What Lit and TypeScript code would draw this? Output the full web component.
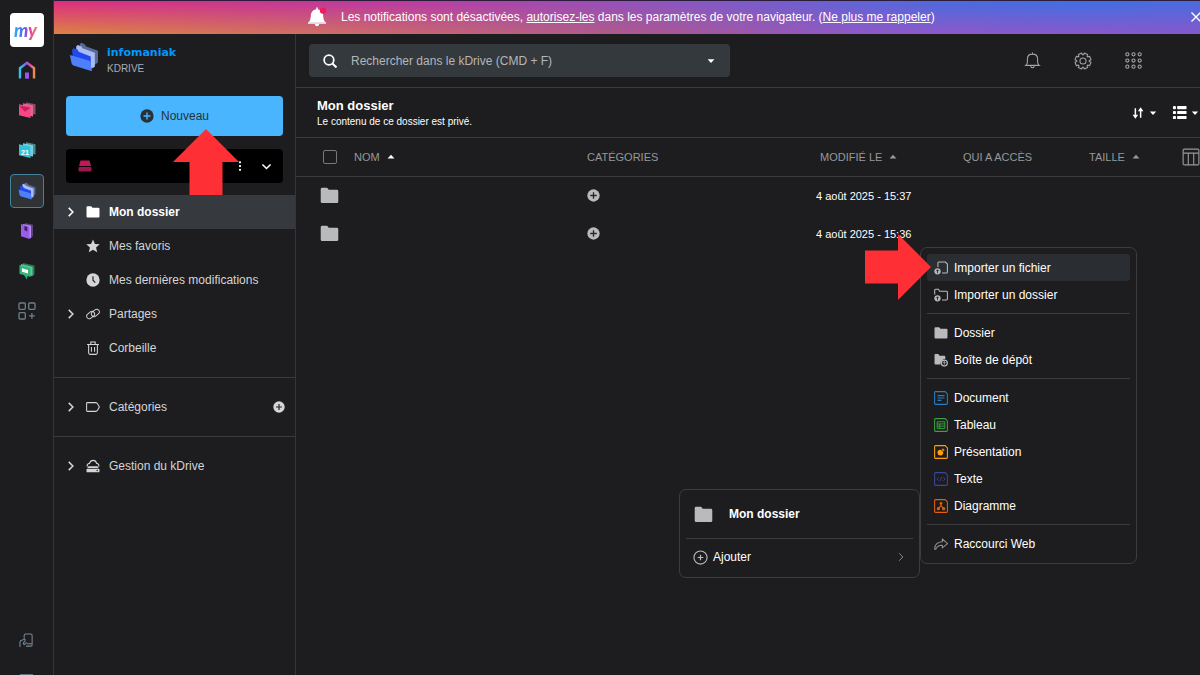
import { LitElement, html, css, svg, nothing } from "lit";
import { customElement } from "lit/decorators.js";
import { classMap } from "lit/directives/class-map.js";

const icon = (size: number, body: unknown, box = "0 0 16 16") => html`
  <svg class="icon" width=${size} height=${size} viewBox=${box} fill="none" aria-hidden="true">${body}</svg>`;

const folder = svg`<path d="M.6 2.700Q.6 1.500 1.800 1.500H5.600Q6.200 1.500 6.600 2.100L7.300 3.200H14.200Q15.400 3.200 15.400 4.400V13.200Q15.400 14.400 14.200 14.400H1.800Q.6 14.400 .6 13.200Z" fill="currentColor"/>`;
const disc = (cross: string) => svg`<circle cx="8" cy="8" r="7.600" fill="currentColor"/><path d="M8 4V12M4 8H12" stroke=${cross} stroke-width="1.600"/>`;
const plusDisc = disc("#232527");
const chevronRight = svg`<path d="M5 2.500L10.500 8L5 13.500" stroke="currentColor" stroke-width="2"/>`;
const chevronDown = svg`<path d="M3 5.500L8 10.500L13 5.500" stroke="currentColor" stroke-width="1.900"/>`;
const caretDown = svg`<path d="M3 5.500H13L8 11Z" fill="currentColor"/>`;
const caretUp = svg`<path d="M2.500 10.500H13.500L8 4.500Z" fill="currentColor"/>`;
const star = svg`<path d="M8 .6L10.200 5.600L15.700 6.100L11.500 9.700L12.800 15.200L8 12.300L3.200 15.200L4.500 9.700L.3 6.100L5.800 5.600Z" fill="currentColor"/>`;
const clock = svg`<circle cx="8" cy="8" r="7.600" fill="currentColor"/><path d="M8 3.800V8.300L10.600 10.900" stroke="#1d1d1f" stroke-width="1.300"/>`;
const link = svg`<g stroke="currentColor" stroke-width="1.100"><rect x="-4.900" y="-3" width="9.800" height="6" rx="3" transform="translate(5.300 9.200) rotate(-38)"/><rect x="-4.900" y="-3" width="9.800" height="6" rx="3" transform="translate(10.700 6.800) rotate(-38)"/></g>`;
const bin = svg`<path d="M1.200 4H14.800M5.500 4V1.200H10.500V4M3 4V13.500Q3 15.300 4.700 15.300H11.300Q13 15.300 13 13.500V4M6.200 6.800V12.200M9.800 6.800V12.200" stroke="currentColor" stroke-width="1.200"/>`;
const tag = svg`<path d="M1.200 3H11Q12.500 3 13.500 4.800L15 7.300Q15.300 8 15 8.700L13.500 11.200Q12.500 13 11 13H1.800Q.7 13 .7 12V4Q.7 3 1.500 3Z" stroke="currentColor" stroke-width="1.200"/>`;
const cloudDrive = svg`<path d="M1.500 8.800Q.6 5.600 4 5Q5 1.600 8.200 1.600Q11.300 1.600 12.200 5Q15.500 5.600 14.500 8.800" stroke="currentColor" stroke-width="1.300"/><path d="M2.800 8.300H13.200L14.500 10.200H1.500Z" fill="currentColor"/><rect x=".6" y="11" width="14.800" height="4.200" rx="1" fill="currentColor"/><circle cx="12.800" cy="13.100" r=".8" fill="#1d1d1f"/>`;
const bell = svg`<path d="M1.700 12.600Q3.200 11.500 3.200 9.500V6.600Q3.200 2 8 2Q12.800 2 12.800 6.600V9.500Q12.800 11.500 14.300 12.600ZM8 .4V2M6.300 13.200Q6.800 14.900 8 14.900Q9.200 14.900 9.700 13.200" stroke="currentColor" stroke-width="1"/>`;
const gearOutline = Array.from({ length: 8 }, (_, i) =>
  [[-13, 9], [13, 9], [17, 7], [28, 7]].map(([d, r]) => {
    const a = ((i * 45 + 22.5 + d) * Math.PI) / 180;
    return `${(10 + r * Math.cos(a)).toFixed(2)} ${(10 + r * Math.sin(a)).toFixed(2)}`;
  }).join("L")).join("L");
const gear = svg`<path d=${`M${gearOutline}Z`} stroke="currentColor" stroke-width="1.200" stroke-linejoin="round"/><circle cx="10" cy="10" r="3.400" stroke="currentColor" stroke-width="1.200"/>`;
const dots9 = svg`${[2.200, 8, 13.800].map((y) => [2.200, 8, 13.800].map((x) => svg`<circle cx=${x} cy=${y} r="1.500" stroke="currentColor" stroke-width="1"/>`))}`;
const columns = svg`<rect x="1" y="1" width="14" height="14" rx="1" stroke="currentColor"/><path d="M1 4.500H15M5.600 4.500V15M10.400 4.500V15" stroke="currentColor"/>`;
const upBadge = svg`<circle cx="4" cy="11.800" r="3.600" fill="#b9babc"/><path d="M4 14V10.200M2.500 11.600L4 10L5.500 11.600" stroke="#25282b" stroke-width="1"/>`;
const importFile = svg`<path d="M4.500 6.800V2.300Q4.500 1.200 5.600 1.200H12.900L15.300 3.500V12.600Q15.300 13.800 14 13.800H9.200" stroke="currentColor" stroke-width="1.200"/>${upBadge}`;
const importFolder = svg`<path d="M.8 7.300V2.500Q.8 1.500 1.800 1.500H5L6.500 3.800H14.200Q15.300 3.800 15.300 4.800V12.600Q15.300 13.600 14.200 13.600H9.200" stroke="currentColor" stroke-width="1.200"/>${upBadge}`;
const depositBox = svg`<path d="M.6 2Q.6 1 1.600 1H5L6.300 3H11.700Q12.900 3 12.900 4.100V6.500Q8 7 7.300 13H1.700Q.6 13 .6 11.900Z" fill="currentColor"/><circle cx="11.800" cy="11.500" r="3.400" stroke="currentColor" stroke-width="1.400"/><path d="M11.800 13.300V9.900M10.500 11.100L11.800 9.800L13.100 11.100" stroke="currentColor"/>`;
const page = (body: unknown) => svg`<path d="M1.700 .7H12.700L15.300 3.300V14.200Q15.300 15.300 14.200 15.300H1.700Q.7 15.300 .7 14.200V1.700Q.7 .7 1.700 .7Z" stroke="currentColor" stroke-width="1.200"/>${body}`;
const doc = page(svg`<path d="M4 5.300H12M4 8H12M4 10.700H8.500" stroke="currentColor" stroke-width="1.300"/>`);
const sheet = page(svg`<path d="M3.600 4.300H12.400V11.900H3.600ZM3.600 6.800H12.400M3.600 9.300H12.400M6.600 6.800V11.900" stroke="currentColor" stroke-width="1.100"/>`);
const slides = page(svg`<circle cx="7.300" cy="8.700" r="3.300" fill="currentColor"/><path d="M9 3.600A3.300 3.300 0 0 1 12.300 6.900H9Z" fill="currentColor" stroke="#1d1d1f" stroke-width=".6"/>`);
const code = page(svg`<path d="M5.300 6L3.500 8L5.300 10M10.700 6L12.500 8L10.700 10M8.700 5.800L7.300 10.200" stroke="currentColor" stroke-width="1"/>`);
const diagram = page(svg`<path d="M8 5.500V8M8 7.500L5.200 10.800M8 7.500L10.800 10.800" stroke="currentColor" stroke-width="1.300"/><circle cx="8" cy="5" r="1.600" fill="currentColor"/><circle cx="5" cy="11" r="1.800" fill="currentColor"/><circle cx="11" cy="11" r="1.800" fill="currentColor"/>`);
const share = svg`<path d="M9.500 2.200L15.500 7.500L9.500 12.500V9.500Q4 9.300 2 14H.7Q.8 6 9.500 5.500Z" stroke="currentColor" stroke-width="1.200" stroke-linejoin="round"/>`;

const folders3d = svg`
  <path d="M10.500 2L12 .8L15.500 2.400L16.200 4L28 8.500V19.800L25 22L10.500 16Z" fill="#5a6a99"/>
  <path d="M7 4L8.500 3L12 4.400L13 6L25 10.500V24L22 25.500L7 19Z" fill="#a9bdf4"/>
  <path d="M3 7.500L4.500 6L8.500 7.500L9.300 9.500L21 14V27L4 20Z" fill="#2148f0"/>
  <path d="M.8 12.500L19 17.800Q20.500 18.200 20.700 19.500L22.300 28.200L4.300 22.800Q2.800 22 2.500 20.500Z" fill="#4f80fb"/>`;
const stack = (a: string, b: string, c: string, body: unknown) => svg`
  <path d="M8 1.200L17.500 3.200V13.500L8 12Z" fill=${c}/>
  <path d="M5 2.200L15 4.200V15.500L5 13.500Z" fill=${b}/>
  <path d="M1 3.200L12.500 5.600V17L1 14.200Z" fill=${a}/>${body}`;
const home = svg`<defs><linearGradient id="h" x1="0" x2="1"><stop stop-color="#26c6f5"/><stop offset=".45" stop-color="#8a5cf0"/><stop offset=".75" stop-color="#e0559a"/><stop offset="1" stop-color="#f08a50"/></linearGradient></defs>
  <path d="M2 17.500V7.200L9 1.800L16 7.200V17.500" stroke="url(#h)" stroke-width="2.400"/><rect x="7" y="11.500" width="4" height="6.200" fill="#9a55e8"/>`;
const mail = stack("#fb4585", "#d96a95", "#8f4a66", svg`<path d="M1 4.500L7 10.800L12.500 6.800" fill="#c91f5f"/>`);
const calendar = stack("#2fc4da", "#7ccdd6", "#4a8a92", svg`<text x="3" y="13.500" font-size="7" font-weight="700" fill="#fff" font-family="Liberation Sans, sans-serif">21</text>`);
const book = svg`<path d="M7 1L15 2.800V14L12 17L5 14Z" fill="#5d4585"/><path d="M5 2L13 3.800V16L5 14Z" fill="#b98cf0"/><path d="M3 2L11.500 4.800V17L3 14.200Z" fill="#9a5cf0"/><path d="M6.500 4V9L8 8.200L9.300 10V5Z" fill="#3a2060"/>`;
const chat = svg`<path d="M5 1L16.500 3.500V12.500L12 15L5 11Z" fill="#2a7a55"/><path d="M3 2L14.500 5V14L3 11Z" fill="#62c79a"/><path d="M1.500 3L12.500 6V14.500L9.500 14L9 17.500L6 13L1.500 12Z" fill="#32b57c"/><path d="M4 6.300L10 8V11.500L4 9.800Z" fill="#fff"/>`;
const apps = svg`<g stroke="#6d7f8c" stroke-width="1.300"><rect x="1" y="1" width="6.300" height="6.300" rx="1"/><rect x="10.700" y="1" width="6.300" height="6.300" rx="1"/><rect x="1" y="10.700" width="6.300" height="6.300" rx="1"/><path d="M13.900 11V16.800M11 13.900H16.800"/></g>`;
const device = svg`<g stroke="#75899a" stroke-width="1.100"><path d="M5.500 6V2.500Q5.500 1 7 1H12.500Q14 1 14 2.500V12.500Q14 14 12.500 14H7.500M8 11.500H14"/><path d="M1 15V10.500Q1 8 3.500 7.500L5.500 6.800Q7 6.500 6.500 8L4.500 11L5.500 12.500L8 10"/></g>`;

const RAIL = [
  { name: "Accueil", art: home, box: "0 0 18 18" },
  { name: "Mail", art: mail, box: "0 0 18 18" },
  { name: "Calendrier", art: calendar, box: "0 0 18 18" },
  { name: "kDrive", art: folders3d, box: "0 0 29 29", on: true },
  { name: "Contacts", art: book, box: "0 0 18 18" },
  { name: "kChat", art: chat, box: "0 0 18 18" },
  { name: "Applications", art: apps, box: "0 0 18 18" },
];

const NAV = [
  [
    { label: "Mon dossier", art: folder, open: true, on: true },
    { label: "Mes favoris", art: star },
    { label: "Mes dernières modifications", art: clock },
    { label: "Partages", art: link, open: true },
    { label: "Corbeille", art: bin },
  ],
  [{ label: "Catégories", art: tag, open: true, add: true }],
  [{ label: "Gestion du kDrive", art: cloudDrive, open: true }],
] as { label: string; art: unknown; open?: boolean; on?: boolean; add?: boolean }[][];

const MENU = [
  [
    { label: "Importer un fichier", art: importFile, tone: "grey", on: true },
    { label: "Importer un dossier", art: importFolder, tone: "grey" },
  ],
  [
    { label: "Dossier", art: folder, tone: "grey" },
    { label: "Boîte de dépôt", art: depositBox, tone: "grey" },
  ],
  [
    { label: "Document", art: doc, tone: "blue" },
    { label: "Tableau", art: sheet, tone: "green" },
    { label: "Présentation", art: slides, tone: "amber" },
    { label: "Texte", art: code, tone: "indigo" },
    { label: "Diagramme", art: diagram, tone: "orange" },
  ],
  [{ label: "Raccourci Web", art: share, tone: "dim" }],
] as { label: string; art: unknown; tone: string; on?: boolean }[][];

const base = css`
  :host { display: block; }
  * { box-sizing: border-box; }
  .icon { display: block; flex: none; }
  button { font: inherit; color: inherit; background: none; border: 0; padding: 0; margin: 0; display: flex; align-items: center; text-align: left; }
  a { color: inherit; }
`;

@customElement("app-rail")
class AppRail extends LitElement {
  static styles = [base, css`
    :host { display: flex; flex-direction: column; align-items: center; gap: 6px; width: 54px; flex: none; padding: 13px 0 0; border-right: 1px solid #343537; }
    .cell { width: 34px; height: 34px; display: flex; align-items: center; justify-content: center; border-radius: 4px; border: 1px solid transparent; }
    .on { background: #303336; border-color: #47809c; }
    .logo { background: #fff; }
    .my { font: italic 900 18px/24px Lato, sans-serif; color: transparent; background: linear-gradient(90deg, #28b6ee, #5a5cf0 40%, #e0459c 65%, #f29048); background-clip: text; padding-right: 2px; }
    .on { margin-top: 1px; }
    .end { margin-top: auto; }
    .last { height: 12px; align-items: flex-start; }
    .cut { height: 1px; width: 13px; background: #60717f; margin-top: 10px; }
  `];
  render() {
    return html`
      <button class="cell logo"><span class="my">my</span></button>
      ${RAIL.map((r) => html`<button class=${classMap({ cell: true, on: !!r.on })} aria-label=${r.name}>${icon(18, r.art, r.box)}</button>`)}
      <button class="cell end" aria-label="Appareils">${icon(15, device)}</button>
      <button class="cell last" aria-label="Réduire"><span class="cut"></span></button>`;
  }
}

@customElement("drive-sidebar")
class DriveSidebar extends LitElement {
  static styles = [base, css`
    :host { width: 242px; flex: none; border-right: 1px solid #343537; position: relative; color: #d4d5d7; }
    .brand { display: flex; gap: 8px; padding: 8px 15px 0; height: 62px; }
    .names { padding-top: 3px; }
    .name { font: 700 11px/16px "DejaVu Sans", sans-serif; color: #0098ff; }
    .product { font-size: 10px; line-height: 16px; color: #a4aeb8; }
    .actions { padding: 0 12px 12px; display: grid; gap: 13px; }
    .new { height: 40px; border-radius: 4px; background: #4ab5ff; color: #263238; justify-content: center; gap: 7px; }
    .drive { height: 34px; border-radius: 4px; background: #000; color: #fff; display: flex; align-items: center; padding: 0 10px 0 12px; gap: 14px; }
    .more { margin-left: auto; }
    .group { border-bottom: 1px solid #3a3b3d; padding: 12px 0; }
    .group:first-of-type { padding-top: 0; }
    .group:last-of-type { border-bottom: 0; }
    .row { display: grid; grid-template-columns: 12px 14px 1fr 12px; align-items: center; column-gap: 9px; height: 34px; padding: 0 10px 0 11px; }
    .on { background: #363a3e; color: #fff; font-weight: 700; }
    .row a { text-decoration: none; }
    .pointer { position: absolute; left: 119px; top: 95px; z-index: 2; }
  `];
  render() {
    return html`
      <div class="brand">
        ${icon(30, folders3d, "0 0 29 29")}
        <div class="names"><div class="name">infomaniak</div><div class="product">KDRIVE</div></div>
      </div>
      <div class="actions">
        <button class="new">${icon(14, disc("#4ab5ff"))}Nouveau</button>
        <div class="drive">
          <svg class="icon" width="14" height="12" viewBox="0 0 14 12" aria-hidden="true"><path d="M2.500 .5H11.500L13 6H1Z" fill="#c2185b"/><rect x=".5" y="7" width="13" height="4.500" rx="1" fill="#a01450"/></svg>
          <button class="more" aria-label="Options">${icon(12, svg`<g fill="#fff"><circle cx="8" cy="3" r="1.500"/><circle cx="8" cy="8" r="1.500"/><circle cx="8" cy="13" r="1.500"/></g>`)}</button>
          <button aria-label="Changer de kDrive">${icon(13, chevronDown)}</button>
        </div>
      </div>
      <nav>
        ${NAV.map((g) => html`<section class="group">${g.map((n) => html`
          <div class=${classMap({ row: true, on: !!n.on })}>
            ${n.open ? html`<button aria-label="Déplier">${icon(12, chevronRight)}</button>` : html`<span></span>`}
            ${icon(14, n.art)}
            <a href="#">${n.label}</a>
            ${n.add ? html`<button aria-label="Ajouter">${icon(12, plusDisc)}</button>` : nothing}
          </div>`)}</section>`)}
      </nav>
      <svg class="pointer" width="66" height="66" viewBox="0 0 66 66" aria-hidden="true"><path d="M33 0L66 33H49.500V66H16.500V33H0Z" fill="#ff3035"/></svg>`;
  }
}

@customElement("file-browser")
class FileBrowser extends LitElement {
  static styles = [base, css`
    :host { flex: 1; min-width: 0; color: #fff; }
    .top { display: flex; align-items: center; height: 54px; padding: 0 58px 0 13px; border-bottom: 1px solid #3a3b3d; }
    .search { display: flex; align-items: center; width: 421px; height: 33px; border-radius: 4px; background: #34393d; padding: 0 13px 0 14px; gap: 14px; }
    .search input { flex: 1; min-width: 0; border: 0; background: none; font: inherit; color: #fff; padding: 0; outline: 0; }
    .search input::placeholder { color: #b4b6b8; opacity: 1; }
    .tools { margin-left: auto; display: flex; align-items: center; gap: 33px; color: #a4a5a7; }
    .head { display: flex; justify-content: space-between; align-items: center; height: 49px; padding: 0 0 0 21px; }
    h1 { font-size: 13px; line-height: 18px; margin: 0; }
    .note { margin: 0; font-size: 10px; line-height: 14px; }
    .views { display: flex; gap: 14px; }
    .views button { gap: 3px; }
    table { width: 100%; border-collapse: collapse; table-layout: fixed; font-size: 11px; }
    th, td { padding: 0 0 0 10px; text-align: left; white-space: nowrap; height: 38px; }
    th { height: 39px; font-weight: 400; color: #97989a; border: solid #3a3b3d; border-width: 1px 0; }
    .check { width: 48px; padding-left: 24px; }
    .check input { appearance: none; display: block; width: 14px; height: 14px; margin: 0 0 0 3px; border: 1px solid #77787a; border-radius: 2px; }
    .cat { width: 229px; }
    .date { width: 147px; }
    th.date { padding-left: 14px; }
    .who { width: 126px; }
    .size { width: 94px; }
    .cols { width: 27px; padding-left: 9px; }
    .sort { display: flex; align-items: center; gap: 6px; }
    .bright { color: #fff; }
    .grey { color: #b9babc; }
  `];
  render() {
    return html`
      <header class="top">
        <label class="search">
          ${icon(14, svg`<circle cx="6.800" cy="6.800" r="5.500" stroke="#fff" stroke-width="2"/><path d="M10.800 10.800L15.400 15.400" stroke="#fff" stroke-width="2.300"/>`)}
          <input type="search" aria-label="Rechercher" placeholder="Rechercher dans le kDrive (CMD + F)">
          ${icon(12, svg`<path d="M3.500 5.500H12.500L8 10.500Z" fill="#fff"/>`)}
        </label>
        <div class="tools">
          <button aria-label="Notifications">${icon(17, bell)}</button>
          <button aria-label="Paramètres">${icon(18, gear, "0 0 20 20")}</button>
          <button aria-label="Applications">${icon(17, dots9)}</button>
        </div>
      </header>
      <div class="head">
        <div><h1>Mon dossier</h1><p class="note">Le contenu de ce dossier est privé.</p></div>
        <div class="views">
          <button aria-label="Trier">${icon(14, svg`<path d="M5 2.500V11M11 13.500V5" stroke="#fff" stroke-width="1.700"/><path d="M1.800 10H8.200L5 14.500ZM7.800 6H14.200L11 1.500Z" fill="#fff"/>`)}${icon(10, caretDown)}</button>
          <button aria-label="Affichage">${icon(15, svg`<g fill="#fff"><rect x="1" y="1" width="3.200" height="3.400" rx="1"/><rect x="1" y="6.300" width="3.200" height="3.400" rx="1"/><rect x="1" y="11.600" width="3.200" height="3.400" rx="1"/><rect x="5.500" y="1" width="10" height="3.400" rx=".6"/><rect x="5.500" y="6.300" width="10" height="3.400" rx=".6"/><rect x="5.500" y="11.600" width="10" height="3.400" rx=".6"/></g>`)}${icon(10, caretDown)}</button>
        </div>
      </div>
      <table>
        <thead><tr>
          <th class="check"><input type="checkbox" aria-label="Tout sélectionner"></th>
          <th><span class="sort">NOM <span class="bright">${icon(10, caretUp)}</span></span></th>
          <th class="cat">CATÉGORIES</th>
          <th class="date"><span class="sort">MODIFIÉ LE ${icon(10, caretUp)}</span></th>
          <th class="who">QUI A ACCÈS</th>
          <th class="size"><span class="sort">TAILLE ${icon(10, caretUp)}</span></th>
          <th class="cols"><button aria-label="Colonnes">${icon(18, columns)}</button></th>
        </tr></thead>
        <tbody>
          ${["4 août 2025 - 15:37", "4 août 2025 - 15:36"].map((d) => html`<tr>
            <td class="check grey">${icon(19, folder)}</td><td></td>
            <td class="grey"><button aria-label="Ajouter une catégorie">${icon(13, plusDisc)}</button></td>
            <td>${d}</td><td></td><td></td><td></td>
          </tr>`)}
        </tbody>
      </table>`;
  }
}

@customElement("app-root")
class AppRoot extends LitElement {
  static styles = [base, css`
    :host { display: flex; height: 100vh; overflow: hidden; position: relative; background: #1d1d1f; color: #fff; font: 12px/16px "Liberation Sans", Arial, sans-serif; }
    .page { flex: 1; min-width: 0; display: flex; flex-direction: column; }
    .banner { position: relative; display: flex; align-items: center; gap: 13px; height: 34px; flex: none; padding: 0 0 2px 253px; overflow: hidden; border-top: 1px solid #2c1c38;
      background: linear-gradient(90deg, #dc2d80, #b93ca5 32%, #8958c4 55%, #4b6be0 78%, #3f70e4 90%, #4a6ce0); }
    .banner::before { content: ""; position: absolute; inset: 0; background: linear-gradient(90deg, #dd8244, #cc6c68 26%, #aa5790 52%, #9058c6 70%, #8558cc); mask-image: linear-gradient(transparent, #000); }
    .banner > * { position: relative; }
    .banner p { margin: 0; white-space: nowrap; }
    .close { margin-left: auto; margin-right: -2px; }
    .body { flex: 1; min-height: 0; display: flex; }
    .menu { position: absolute; background: #1d1d1f; border: 1px solid #3c3d3f; border-radius: 7px; padding: 6px; }
    .context { left: 679px; top: 489px; width: 241px; z-index: 1; padding-bottom: 2px; }
    .create { left: 920px; top: 247px; width: 217px; }
    .title { display: flex; align-items: center; gap: 16px; height: 43px; padding: 0 9px 6px 8px; font-weight: 700; border-bottom: 1px solid #3c3d3f; }
    .menu button { width: 100%; height: 27px; padding: 0 7px; gap: 6px; border-radius: 3px; }
    .context button { height: 36px; gap: 5px; }
    .context .go { margin-left: auto; }
    .set + .set { border-top: 1px solid #3c3d3f; margin-top: 5px; padding-top: 5px; }
    .menu .on { background: #2a2e32; }
    .grey { color: #b9babc; }
    .dim { color: #8f9092; }
    .blue { color: #2c7cc2; }
    .green { color: #38a03e; }
    .amber { color: #ff9f0f; }
    .indigo { color: #3c459c; }
    .orange { color: #e2600c; }
    .pointer { position: absolute; left: 865px; top: 234px; z-index: 2; }
  `];
  render() {
    return html`
      <app-rail></app-rail>
      <div class="page">
        <div class="banner">
          <svg class="icon" width="21" height="22" viewBox="0 0 21 22" aria-hidden="true">
            <path d="M1 17.500Q3.800 14.500 3.800 10.500Q3.800 4 9.200 3.200V1.500H10.800V3.200Q16.200 4 16.200 10.500Q16.200 14.500 19 17.500Z" fill="#fff"/>
            <path d="M1 16H19V17.800H1Z" fill="#e2dfe6"/><path d="M7.800 18H12.200Q11.800 20.200 10 20.200Q8.200 20.200 7.800 18Z" fill="#fff"/>
            <circle cx="16" cy="4.600" r="3.200" fill="#ee1c5e"/></svg>
          <p>Les notifications sont désactivées, <a href="#">autorisez-les</a> dans les paramètres de votre navigateur. (<a href="#">Ne plus me rappeler</a>)</p>
          <button class="close" aria-label="Fermer">${icon(12, svg`<path d="M2 2L14 14M14 2L2 14" stroke="#fff" stroke-width="1.800"/>`)}</button>
        </div>
        <div class="body">
          <drive-sidebar></drive-sidebar>
          <file-browser></file-browser>
        </div>
      </div>
      <div class="menu context">
        <div class="title"><span class="grey">${icon(19, folder)}</span>Mon dossier</div>
        <button><span class="grey">${icon(15, svg`<circle cx="8" cy="8" r="7" stroke="currentColor" stroke-width="1.200"/><path d="M8 5V11M5 8H11" stroke="currentColor" stroke-width="1.300"/>`)}</span>Ajouter<span class="go dim">${icon(10, svg`<path d="M5 2L11 8L5 14" stroke="currentColor" stroke-width="1.500"/>`)}</span></button>
      </div>
      <div class="menu create">
        ${MENU.map((s) => html`<div class="set">${s.map((m) => html`
          <button class=${m.on ? "on" : ""}><span class=${m.tone}>${icon(14, m.art)}</span>${m.label}</button>`)}</div>`)}
      </div>
      <svg class="pointer" width="66" height="66" viewBox="0 0 66 66" aria-hidden="true"><path d="M66 33L33 0V16.500H0V49.500H33V66Z" fill="#ff3035"/></svg>`;
  }
}
